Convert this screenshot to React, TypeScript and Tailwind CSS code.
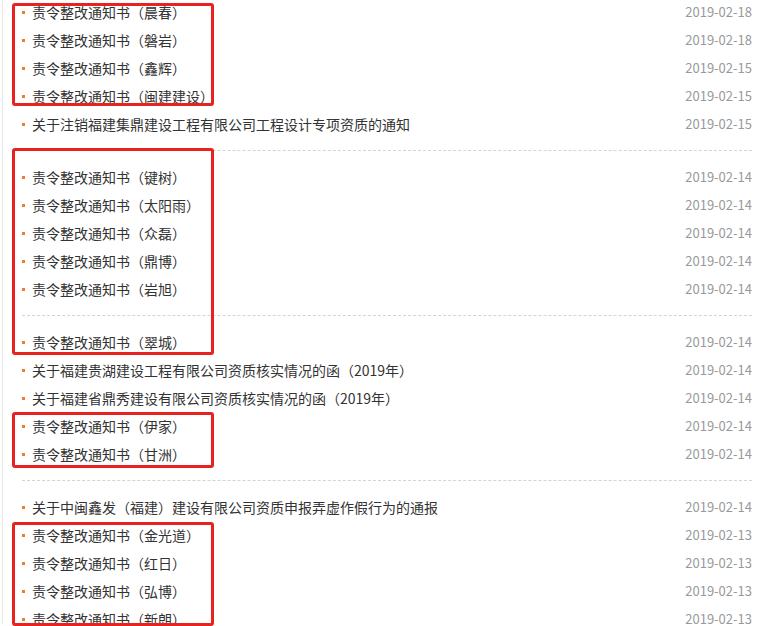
import React from "react";

type Item = { t: string; d: string };

const sections: Item[][] = [
  [
    { t: "责令整改通知书（晨春）", d: "2019-02-18" },
    { t: "责令整改通知书（磐岩）", d: "2019-02-18" },
    { t: "责令整改通知书（鑫辉）", d: "2019-02-15" },
    { t: "责令整改通知书（闽建建设）", d: "2019-02-15" },
    { t: "关于注销福建集鼎建设工程有限公司工程设计专项资质的通知", d: "2019-02-15" },
  ],
  [
    { t: "责令整改通知书（键树）", d: "2019-02-14" },
    { t: "责令整改通知书（太阳雨）", d: "2019-02-14" },
    { t: "责令整改通知书（众磊）", d: "2019-02-14" },
    { t: "责令整改通知书（鼎博）", d: "2019-02-14" },
    { t: "责令整改通知书（岩旭）", d: "2019-02-14" },
  ],
  [
    { t: "责令整改通知书（翠城）", d: "2019-02-14" },
    { t: "关于福建贵湖建设工程有限公司资质核实情况的函（2019年）", d: "2019-02-14" },
    { t: "关于福建省鼎秀建设有限公司资质核实情况的函（2019年）", d: "2019-02-14" },
    { t: "责令整改通知书（伊家）", d: "2019-02-14" },
    { t: "责令整改通知书（甘洲）", d: "2019-02-14" },
  ],
  [
    { t: "关于中闽鑫发（福建）建设有限公司资质申报弄虚作假行为的通报", d: "2019-02-14" },
    { t: "责令整改通知书（金光道）", d: "2019-02-13" },
    { t: "责令整改通知书（红日）", d: "2019-02-13" },
    { t: "责令整改通知书（弘博）", d: "2019-02-13" },
    { t: "责令整改通知书（新朗）", d: "2019-02-13" },
  ],
];

function Row({ item }: { item: Item }) {
  return (
    <li className="flex h-[28px] items-center">
      <span className="mr-[7px] h-[3px] w-[3px] shrink-0 bg-[#ee7c30]" />
      <span className="flex-1 truncate text-[14px] text-[#333333]">{item.t}</span>
      <span className="shrink-0 text-[13px] text-[#999999]">{item.d}</span>
    </li>
  );
}

export default function App() {
  return (
    <div
      className="relative h-[626px] w-[767px] overflow-hidden bg-white"
      style={{ fontFamily: '"Noto Sans CJK SC", "Noto Sans", sans-serif' }}
    >
      <div className="ml-[2px] h-full border-l border-[#e6e6e6]">
        <div className="-mt-[2px] pl-[19px] pr-[15px]">
          {sections.map((sec, i) => (
            <div key={i}>
              <ul>
                {sec.map((it, j) => (
                  <Row key={j} item={it} />
                ))}
              </ul>
              {i < sections.length - 1 && (
                <div className="mt-3 mb-[12px] border-t border-dashed border-[#d4d4d4]" />
              )}
            </div>
          ))}
        </div>
      </div>

      {/* red annotation boxes */}
      <div className="pointer-events-none absolute left-[12px] top-[3px] h-[103px] w-[202px] rounded-[3px] border-[3px] border-[#e8231f]" />
      <div className="pointer-events-none absolute left-[12px] top-[148px] h-[207px] w-[202px] rounded-[3px] border-[3px] border-[#e8231f]" />
      <div className="pointer-events-none absolute left-[12px] top-[412px] h-[56px] w-[202px] rounded-[3px] border-[3px] border-[#e8231f]" />
      <div className="pointer-events-none absolute left-[12px] top-[522px] h-[104px] w-[202px] rounded-[3px] border-[3px] border-[#e8231f]" />
    </div>
  );
}
